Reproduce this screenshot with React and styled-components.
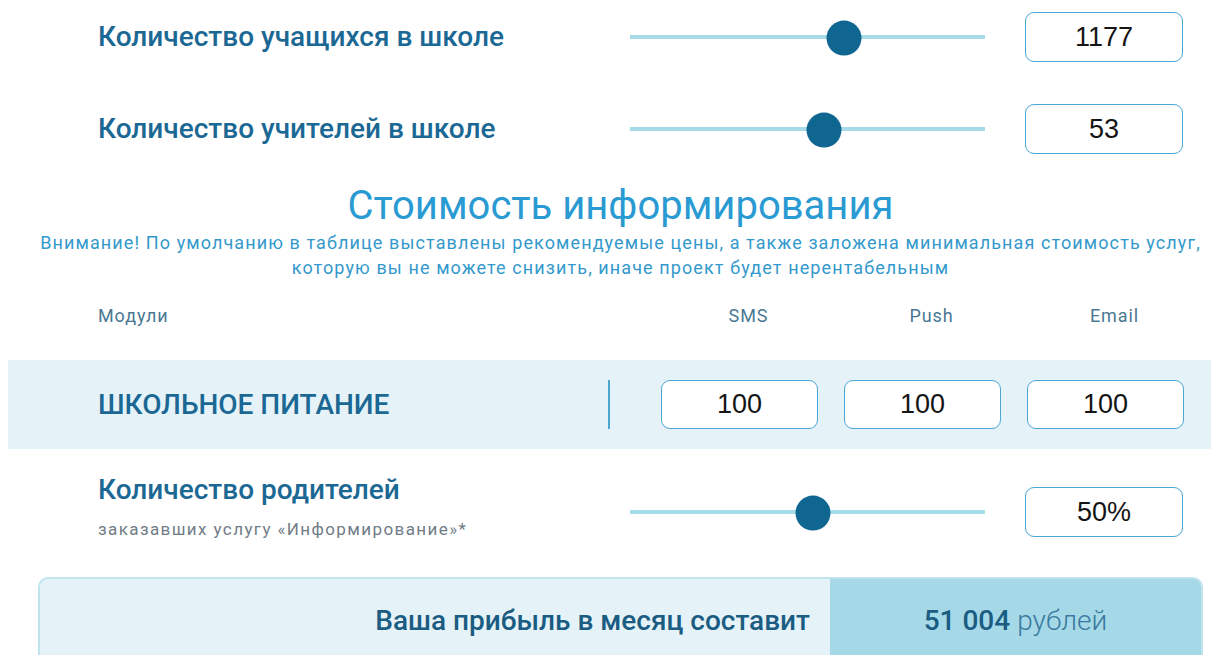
import styled, { createGlobalStyle } from "styled-components";

const GlobalStyle = createGlobalStyle`
    body {
        margin: 0;
        background: #fff;
        font-family: Roboto, "Noto Sans", sans-serif;
    }
`;

const StyledPage = styled.div`
    width: 1211px;
    height: 655px;
    overflow: hidden;
    padding-top: 12px;
    box-sizing: border-box;
`;

const StyledSliderRow = styled.div`
    display: grid;
    grid-template-columns: 532px 355px 158px;
    grid-template-rows: 50px;
    align-items: center;
    padding-left: 98px;
    margin-top: ${(props) => props.top || 0}px;
    & > :last-child {
        margin-left: 40px;
    }
`;

const StyledLabel = styled.div`
    color: #1b6894;
    font-size: 28px;
    line-height: 33px;
    font-weight: 500;
    margin-top: -2px;
`;

const StyledLabelGroup = styled.div`
    align-self: start;
    display: flex;
    flex-direction: column;
    gap: 13px;
    margin-top: -12px;
    span {
        color: #707c86;
        font-size: 17px;
        line-height: 20px;
        letter-spacing: 1.4px;
    }
`;

const StyledTrack = styled.div`
    position: relative;
    height: 4px;
    background-color: #a6dbe8;
`;

const StyledThumb = styled.div`
    position: absolute;
    top: 50%;
    width: 35px;
    height: 35px;
    border-radius: 50%;
    background-color: #0f6690;
    transform: translate(-50%, -47%);
`;

const StyledValue = styled.div`
    box-sizing: border-box;
    width: ${(props) => props.width || 158}px;
    height: ${(props) => props.height || 50}px;
    border: 1px solid #4aa7d6;
    border-radius: 9px;
    background: #fff;
    display: flex;
    align-items: center;
    justify-content: center;
    font-family: "Liberation Sans", Arial, sans-serif;
    font-size: 27px;
    color: #151515;
`;

const StyledTitle = styled.h2`
    margin: 29px 0 0;
    padding-left: 38px;
    width: 1165px;
    text-align: center;
    font-size: 40px;
    font-weight: 400;
    line-height: 46px;
    color: #2a9ad3;
`;

const StyledNote = styled.p`
    margin: 1px 0 0;
    padding-left: 38px;
    width: 1165px;
    text-align: center;
    font-size: 18px;
    line-height: 25px;
    letter-spacing: 1.1px;
    color: #3399cc;
`;

const StyledHeadRow = styled.div`
    display: grid;
    grid-template-columns: 537px repeat(3, 157px);
    column-gap: 26px;
    padding-left: 98px;
    margin-top: 20px;
    height: 30px;
    align-items: center;
    font-size: 18px;
    letter-spacing: 0.9px;
    color: #4a7893;
    span + span {
        text-align: center;
        padding-left: 18px;
    }
`;

const StyledBand = styled.div`
    margin: 30px 0 0 8px;
    height: 89px;
    background-color: #e5f3f9;
    display: flex;
    align-items: center;
    padding-left: 90px;
    h3 {
        margin: 0;
        width: 510px;
        font-size: 28px;
        font-weight: 500;
        color: #1b6894;
    }
`;

const StyledDivider = styled.div`
    width: 2px;
    height: 49px;
    background-color: #4aa6d0;
`;

const StyledPrices = styled.div`
    display: flex;
    gap: 26px;
    margin-left: 51px;
`;

const StyledResult = styled.div`
    margin: 40px 0 0 38px;
    width: 1165px;
    height: 90px;
    box-sizing: border-box;
    display: grid;
    grid-template-columns: 790px 1fr;
    border: 2px solid #bfe4ee;
    border-bottom: none;
    border-radius: 10px 10px 0 0;
    overflow: hidden;
    background-color: #e5f3f9;
`;

const StyledResultLabel = styled.div`
    padding: 0 20px 0 0;
    height: 82px;
    display: flex;
    align-items: center;
    justify-content: flex-end;
    font-size: 28px;
    font-weight: 500;
    color: #1a5c82;
`;

const StyledResultValue = styled.div`
    background-color: #a6d9e7;
    height: 82px;
    display: flex;
    align-items: center;
    justify-content: center;
    font-size: 28px;
    font-weight: 300;
    color: #3a7aa0;
    b {
        font-weight: 500;
        color: #1a5c82;
        margin-right: 7px;
    }
`;

function Slider({ percent }) {
    return (
        <StyledTrack>
            <StyledThumb style={{ left: `${percent}%` }} />
        </StyledTrack>
    );
}

const prices = [100, 100, 100];

function App() {
    return (
        <StyledPage>
            <GlobalStyle />
            <StyledSliderRow>
                <StyledLabel>Количество учащихся в школе</StyledLabel>
                <Slider percent={60.3} />
                <StyledValue>1177</StyledValue>
            </StyledSliderRow>
            <StyledSliderRow top={42}>
                <StyledLabel>Количество учителей в школе</StyledLabel>
                <Slider percent={54.6} />
                <StyledValue>53</StyledValue>
            </StyledSliderRow>

            <StyledTitle>Стоимость информирования</StyledTitle>
            <StyledNote>
                Внимание! По умолчанию в таблице выставлены рекомендуемые цены, а также заложена
                минимальная стоимость услуг,
                <br />
                которую вы не можете снизить, иначе проект будет нерентабельным
            </StyledNote>

            <StyledHeadRow>
                <span>Модули</span>
                <span>SMS</span>
                <span>Push</span>
                <span>Email</span>
            </StyledHeadRow>

            <StyledBand>
                <h3>ШКОЛЬНОЕ ПИТАНИЕ</h3>
                <StyledDivider />
                <StyledPrices>
                    {prices.map((price, i) => (
                        <StyledValue key={i} width={157} height={49}>
                            {price}
                        </StyledValue>
                    ))}
                </StyledPrices>
            </StyledBand>

            <StyledSliderRow top={38}>
                <StyledLabelGroup>
                    <StyledLabel>Количество родителей</StyledLabel>
                    <span>заказавших услугу «Информирование»*</span>
                </StyledLabelGroup>
                <Slider percent={51.5} />
                <StyledValue>50%</StyledValue>
            </StyledSliderRow>

            <StyledResult>
                <StyledResultLabel>Ваша прибыль в месяц составит</StyledResultLabel>
                <StyledResultValue>
                    <b>51 004</b>рублей
                </StyledResultValue>
            </StyledResult>
        </StyledPage>
    );
}

export default App;
